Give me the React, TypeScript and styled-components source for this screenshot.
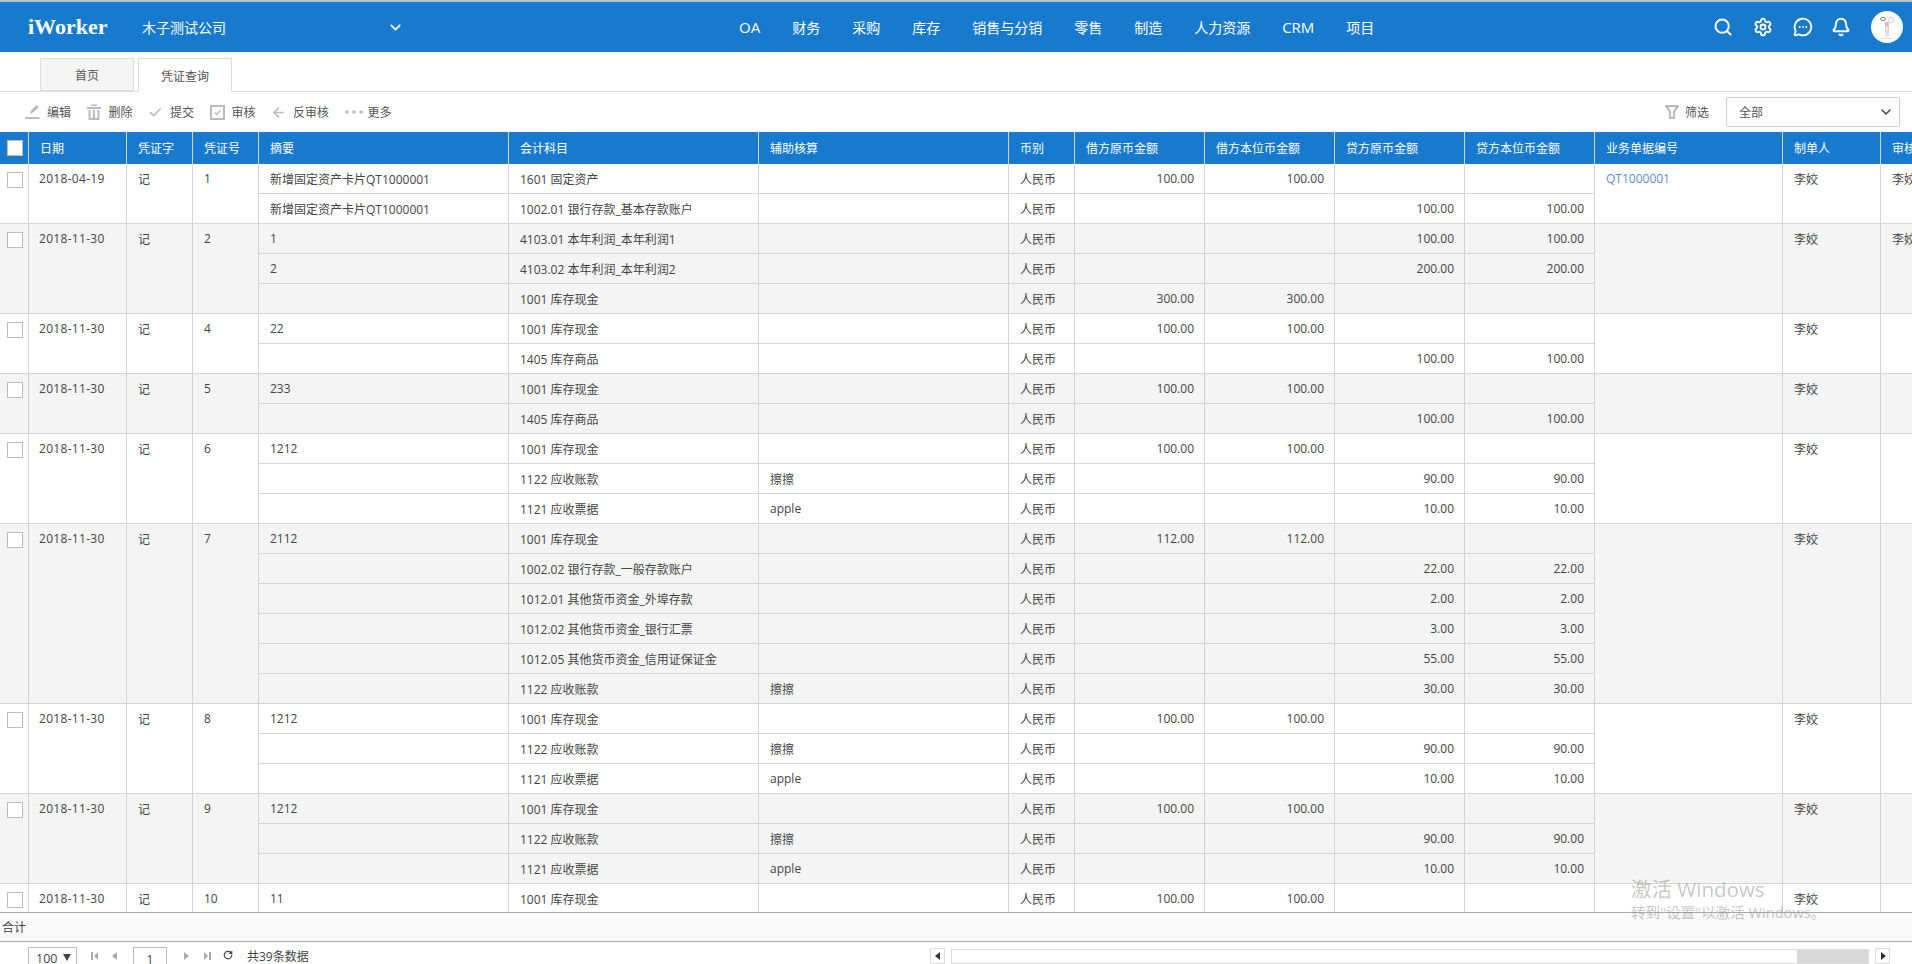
import { Fragment } from "react";
import styled, { createGlobalStyle } from "styled-components";
import { ArrowLeft, Bell, Check, ChevronDown, MessageCircleMore, RotateCw, Search, Settings } from "lucide-react";

const GlobalStyle = createGlobalStyle`
	html, body {
		margin: 0;
		height: 100%;
		overflow: hidden;
		background: #fff;
	}
	body {
		font-family: "Open Sans", "Noto Sans CJK SC", sans-serif;
		font-size: 12px;
		color: #444;
	}
	#root {
		height: 100%;
	}
`;

const Page = styled.div`
	height: 964px;
	display: flex;
	flex-direction: column;
	overflow: hidden;
	position: relative;
`;

const Header = styled.header`
	flex: 0 0 52px;
	box-sizing: border-box;
	border-top: 2px solid #b9c0c6;
	background: #187acf;
	color: #fff;
	display: flex;
	align-items: center;
	padding-left: 28px;
`;

const Logo = styled.div`
	width: 114px;
	font-family: "Liberation Serif", serif;
	font-weight: 700;
	font-size: 22px;
`;

const Company = styled.div`
	width: 262px;
	display: flex;
	align-items: center;
	justify-content: space-between;
	font-size: 14px;
`;

const Nav = styled.nav`
	display: flex;
	gap: 32px;
	margin-left: 335px;
	font-size: 14px;
`;

const NavItem = styled.span<{ $latin?: boolean }>`
	font-size: ${(p) => (p.$latin ? "15px" : "14px")};
`;

const HeaderIcons = styled.div`
	margin-left: auto;
	display: flex;
	align-items: center;
	gap: 20px;
	padding-right: 9px;
`;

const BellIcon = styled(Bell)`
	margin-left: -2px;
`;

const Avatar = styled.div`
	width: 32px;
	height: 32px;
	border-radius: 50%;
	background: #fff;
	overflow: hidden;
`;

const TabBar = styled.div`
	flex: 0 0 40px;
	box-sizing: border-box;
	border-bottom: 1px solid #ddd;
	display: flex;
	align-items: flex-end;
	gap: 4px;
	padding-left: 40px;
`;

const Tab = styled.div<{ $active?: boolean }>`
	width: 94px;
	height: ${(p) => (p.$active ? "34px" : "33px")};
	box-sizing: border-box;
	border: 1px solid #ddd;
	border-bottom: ${(p) => (p.$active ? "none" : "1px solid #ddd")};
	margin-bottom: ${(p) => (p.$active ? "-1px" : "0")};
	background: ${(p) => (p.$active ? "#fff" : "#f5f5f5")};
	display: flex;
	align-items: center;
	justify-content: center;
	color: #555;
`;

const Toolbar = styled.div`
	flex: 0 0 40px;
	display: flex;
	align-items: center;
	padding: 0 12px 0 25px;
	gap: 15.5px;
`;

const ToolButton = styled.div<{ $gap?: number }>`
	display: flex;
	align-items: center;
	gap: ${(p) => p.$gap ?? 7}px;
	color: #555;
`;

const ToolIcon = styled.span<{ $w?: number }>`
	width: ${(p) => p.$w ?? 15}px;
	height: 16px;
	display: flex;
	align-items: center;
	justify-content: center;
	color: #bbb;
`;

const FilterGroup = styled.div`
	margin-left: auto;
	display: flex;
	align-items: center;
`;

const FilterLabel = styled(ToolButton)`
	margin-right: 17px;
`;

const FilterSelect = styled.div`
	width: 174px;
	height: 30px;
	box-sizing: border-box;
	border: 1px solid #ccc;
	border-radius: 2px;
	display: flex;
	align-items: center;
	justify-content: space-between;
	padding: 0 5px 0 12px;
	color: #555;
`;

const TableArea = styled.div`
	flex: 1;
	min-height: 0;
	overflow: hidden;
`;

const Grid = styled.table<{ $w: number }>`
	table-layout: fixed;
	border-collapse: separate;
	border-spacing: 0;
	width: ${(p) => p.$w}px;
`;

const HeadCell = styled.th<{ $w: number }>`
	width: ${(p) => p.$w}px;
	height: 32px;
	box-sizing: border-box;
	padding: 0 0 0 11px;
	background: #187acf;
	border-right: 1px solid #d4d4d4;
	color: #fff;
	font-weight: 400;
	text-align: left;
	white-space: nowrap;
	overflow: hidden;
`;

const Row = styled.tr<{ $alt: boolean }>`
	background: ${(p) => (p.$alt ? "#f4f4f4" : "#fff")};
`;

const Cell = styled.td<{ $right?: boolean }>`
	height: 30px;
	box-sizing: border-box;
	padding: 0 ${(p) => (p.$right ? "10px" : "0")} 0 ${(p) => (p.$right ? "0" : "11px")};
	border-right: 1px solid #d4d4d4;
	border-bottom: 1px solid #d4d4d4;
	text-align: ${(p) => (p.$right ? "right" : "left")};
	vertical-align: middle;
	white-space: nowrap;
	overflow: hidden;
`;

const TopCell = styled(Cell)`
	vertical-align: top;
	padding-top: 6px;
`;

const DateCell = styled(TopCell)`
	padding-left: 10px;
	letter-spacing: 0.3px;
`;

const CheckCell = styled(Cell)`
	vertical-align: top;
	padding: 8px 0 0 7px;
`;

const CheckHead = styled(HeadCell)`
	padding: 0 0 0 7px;
`;

const CheckBox = styled.span`
	display: block;
	width: 16px;
	height: 16px;
	box-sizing: border-box;
	border: 1px solid #bbb;
	background: #fff;
`;

const DocLink = styled.span`
	color: #5b8bd8;
`;

const SummaryBar = styled.div`
	flex: 0 0 30px;
	box-sizing: border-box;
	border-top: 1px solid #aaa;
	border-bottom: 1px solid #aaa;
	background: #f9f9f9;
	display: flex;
	align-items: center;
	padding-left: 2px;
	color: #444;
`;

const Pager = styled.div`
	flex: 0 0 22px;
	box-sizing: border-box;
	overflow: hidden;
	display: flex;
	align-items: flex-start;
	padding: 5px 22px 0 28px;
`;

const PageSize = styled.div`
	width: 49px;
	height: 24px;
	box-sizing: border-box;
	border: 1px solid #bbb;
	display: flex;
	justify-content: space-between;
	align-items: flex-start;
	padding: 2px 5px 0 7px;
	font-size: 12.5px;
	flex: none;
`;

const PageSizeArrow = styled.svg`
	margin-top: 3px;
	color: #444;
`;

const PageInput = styled.div`
	width: 34px;
	height: 24px;
	box-sizing: border-box;
	border: 1px solid #bbb;
	text-align: center;
	padding-top: 3px;
	flex: none;
	margin-left: 16px;
`;

const PagerGlyph = styled.svg<{ $ml: number }>`
	flex: none;
	margin: 4px 0 0 ${(p) => p.$ml}px;
	color: #aaa;
`;

const RefreshGlyph = styled.span`
	flex: none;
	display: flex;
	margin: 3px 0 0 12px;
	color: #444;
`;

const Total = styled.span`
	flex: none;
	margin: 0 0 0 14px;
`;

const ScrollArrow = styled.div<{ $push?: boolean }>`
	width: 15px;
	height: 16px;
	box-sizing: border-box;
	border: 1px solid #ddd;
	display: flex;
	align-items: center;
	justify-content: center;
	flex: none;
	margin-top: 1px;
	margin-left: ${(p) => (p.$push ? "auto" : "0")};
`;

const ScrollTrack = styled.div`
	width: 918px;
	height: 15px;
	box-sizing: border-box;
	border: 1px solid #ddd;
	background: #fff;
	margin: 2px 6px 0 6px;
	display: flex;
	justify-content: flex-end;
	flex: none;
`;

const ScrollThumb = styled.div`
	width: 71px;
	background: #d8d8d8;
`;

const Watermark = styled.div`
	position: absolute;
	left: 1631px;
	top: 876px;
	color: rgba(120, 120, 120, 0.42);
	pointer-events: none;
	font-size: 14.6px;
	line-height: 21px;
`;

const WatermarkTitle = styled.div`
	font-size: 20.5px;
	line-height: 26px;
`;

const navItems = ["OA", "财务", "采购", "库存", "销售与分销", "零售", "制造", "人力资源", "CRM", "项目"];

const columns = [
	{ title: "日期", w: 98 },
	{ title: "凭证字", w: 66 },
	{ title: "凭证号", w: 66 },
	{ title: "摘要", w: 250 },
	{ title: "会计科目", w: 250 },
	{ title: "辅助核算", w: 250 },
	{ title: "币别", w: 66 },
	{ title: "借方原币金额", w: 130 },
	{ title: "借方本位币金额", w: 130 },
	{ title: "贷方原币金额", w: 130 },
	{ title: "贷方本位币金额", w: 130 },
	{ title: "业务单据编号", w: 188 },
	{ title: "制单人", w: 98 },
	{ title: "审核人", w: 98 },
];

const checkWidth = 29;
const gridWidth = columns.reduce((sum, c) => sum + c.w, checkWidth);

type Line = { memo?: string; account: string; aux?: string; debit?: string; credit?: string };
type Voucher = { date: string; no: string; doc?: string; auditor?: string; lines: Line[] };

const settle = (memo: string): Line[] => [
	{ memo, account: "1001 库存现金", debit: "100.00" },
	{ account: "1122 应收账款", aux: "擦擦", credit: "90.00" },
	{ account: "1121 应收票据", aux: "apple", credit: "10.00" },
];

const vouchers: Voucher[] = [
	{
		date: "2018-04-19",
		no: "1",
		doc: "QT1000001",
		auditor: "李姣",
		lines: [
			{ memo: "新增固定资产卡片QT1000001", account: "1601 固定资产", debit: "100.00" },
			{ memo: "新增固定资产卡片QT1000001", account: "1002.01 银行存款_基本存款账户", credit: "100.00" },
		],
	},
	{
		date: "2018-11-30",
		no: "2",
		auditor: "李姣",
		lines: [
			{ memo: "1", account: "4103.01 本年利润_本年利润1", credit: "100.00" },
			{ memo: "2", account: "4103.02 本年利润_本年利润2", credit: "200.00" },
			{ account: "1001 库存现金", debit: "300.00" },
		],
	},
	{
		date: "2018-11-30",
		no: "4",
		lines: [
			{ memo: "22", account: "1001 库存现金", debit: "100.00" },
			{ account: "1405 库存商品", credit: "100.00" },
		],
	},
	{
		date: "2018-11-30",
		no: "5",
		lines: [
			{ memo: "233", account: "1001 库存现金", debit: "100.00" },
			{ account: "1405 库存商品", credit: "100.00" },
		],
	},
	{ date: "2018-11-30", no: "6", lines: settle("1212") },
	{
		date: "2018-11-30",
		no: "7",
		lines: [
			{ memo: "2112", account: "1001 库存现金", debit: "112.00" },
			{ account: "1002.02 银行存款_一般存款账户", credit: "22.00" },
			{ account: "1012.01 其他货币资金_外埠存款", credit: "2.00" },
			{ account: "1012.02 其他货币资金_银行汇票", credit: "3.00" },
			{ account: "1012.05 其他货币资金_信用证保证金", credit: "55.00" },
			{ account: "1122 应收账款", aux: "擦擦", credit: "30.00" },
		],
	},
	{ date: "2018-11-30", no: "8", lines: settle("1212") },
	{ date: "2018-11-30", no: "9", lines: settle("1212") },
	{ date: "2018-11-30", no: "10", lines: [{ memo: "11", account: "1001 库存现金", debit: "100.00" }] },
];

const AvatarArt = () => (
	<svg width="32" height="32" viewBox="0 0 32 32" fill="none">
		<ellipse cx="12" cy="8" rx="2.6" ry="1.6" stroke="#666" strokeWidth="0.8" />
		<ellipse cx="20" cy="9" rx="2.4" ry="2.8" stroke="#bbb" strokeWidth="0.7" />
		<circle cx="16" cy="13" r="2.2" fill="#d9b9a8" />
		<path d="M14.5 15h3v6h-3z" fill="#eee6de" stroke="#bbb" strokeWidth="0.5" />
		<path d="M15 21v5M17 21v5" stroke="#bbb" strokeWidth="0.8" />
		<path d="M10 27.5h12" stroke="#ccc" strokeWidth="0.7" />
	</svg>
);

const EditIcon = () => (
	<svg width="15" height="16" viewBox="0 0 15 16" fill="currentColor">
		<path d="M11.5 1 14 3 8 8.5l-3.5 1.5L6 6.5z" />
		<rect x="0" y="13" width="14.5" height="2" />
	</svg>
);

const TrashIcon = () => (
	<svg width="14" height="16" viewBox="0 0 14 16" fill="currentColor">
		<rect x="4" y="0.5" width="6" height="1.5" />
		<rect x="0" y="3" width="14" height="2" />
		<path d="M1.5 6h2v8h2.5V6h2v8h2.5V6h2v10h-11z" />
	</svg>
);

const ReviewIcon = () => (
	<svg width="15" height="15" viewBox="0 0 15 15" fill="none" stroke="currentColor">
		<rect x="1" y="1" width="13" height="13" strokeWidth="2" />
		<path d="m4.5 7.5 2 2 4-4" strokeWidth="1.5" />
	</svg>
);

const DotsIcon = () => (
	<svg width="18" height="4" viewBox="0 0 18 4" fill="currentColor">
		<circle cx="2" cy="2" r="1.8" />
		<circle cx="9" cy="2" r="1.8" />
		<circle cx="16" cy="2" r="1.8" />
	</svg>
);

const FunnelIcon = () => (
	<svg width="14" height="14" viewBox="0 0 14 14" fill="none" stroke="currentColor" strokeWidth="2.2">
		<path d="M1 1.2h12L9 6.5V13H5V6.5z" />
	</svg>
);

const PagerArrow = ({ dir, bar, ml }: { dir: "left" | "right"; bar?: boolean; ml: number }) => (
	<PagerGlyph $ml={ml} width={bar ? 7 : 6} height="10" viewBox={bar ? "0 0 7 10" : "0 0 6 10"} fill="currentColor">
		{dir === "left" ? (
			<path d={bar ? "M7 1v8L3 5z" : "M6 1v8L1 5z"} />
		) : (
			<path d={bar ? "M0 1v8l4-4z" : "M0 1v8l5-4z"} />
		)}
		{bar && <rect x={dir === "left" ? 0 : 5} y="1" width="2" height="8" />}
	</PagerGlyph>
);

const ScrollGlyph = ({ dir }: { dir: "left" | "right" }) => (
	<svg width="6" height="8" viewBox="0 0 6 8" fill="#333">
		{dir === "left" ? <path d="M5 0v8L0 4z" /> : <path d="M1 0v8l5-4z" />}
	</svg>
);

export default function App() {
	return (
		<Page>
			<GlobalStyle />
			<Header>
				<Logo>iWorker</Logo>
				<Company>
					木子测试公司
					<ChevronDown size={17} strokeWidth={2.4} />
				</Company>
				<Nav>
					{navItems.map((n) => (
						<NavItem key={n} $latin={/^[A-Z]+$/.test(n)}>
							{n}
						</NavItem>
					))}
				</Nav>
				<HeaderIcons>
					<Search size={20} strokeWidth={2.4} />
					<Settings size={20} strokeWidth={2.2} />
					<MessageCircleMore size={20} strokeWidth={2.2} />
					<BellIcon size={20} strokeWidth={2.4} />
					<Avatar>
						<AvatarArt />
					</Avatar>
				</HeaderIcons>
			</Header>
			<TabBar>
				<Tab>首页</Tab>
				<Tab $active>凭证查询</Tab>
			</TabBar>
			<Toolbar>
				<ToolButton>
					<ToolIcon>
						<EditIcon />
					</ToolIcon>
					编辑
				</ToolButton>
				<ToolButton>
					<ToolIcon>
						<TrashIcon />
					</ToolIcon>
					删除
				</ToolButton>
				<ToolButton>
					<ToolIcon>
						<Check size={19} strokeWidth={2.4} />
					</ToolIcon>
					提交
				</ToolButton>
				<ToolButton>
					<ToolIcon>
						<ReviewIcon />
					</ToolIcon>
					审核
				</ToolButton>
				<ToolButton>
					<ToolIcon>
						<ArrowLeft size={19} strokeWidth={2.6} />
					</ToolIcon>
					反审核
				</ToolButton>
				<ToolButton $gap={5}>
					<ToolIcon $w={18}>
						<DotsIcon />
					</ToolIcon>
					更多
				</ToolButton>
				<FilterGroup>
					<FilterLabel $gap={5}>
						<ToolIcon>
							<FunnelIcon />
						</ToolIcon>
						筛选
					</FilterLabel>
					<FilterSelect>
						全部
						<ChevronDown size={16} color="#444" strokeWidth={2.2} />
					</FilterSelect>
				</FilterGroup>
			</Toolbar>
			<TableArea>
				<Grid $w={gridWidth}>
					<thead>
						<tr>
							<CheckHead $w={checkWidth}>
								<CheckBox />
							</CheckHead>
							{columns.map((c) => (
								<HeadCell key={c.title} $w={c.w}>
									{c.title}
								</HeadCell>
							))}
						</tr>
					</thead>
					<tbody>
						{vouchers.map((v, vi) => (
							<Fragment key={v.no}>
								{v.lines.map((l, li) => (
									<Row key={li} $alt={vi % 2 === 1}>
										{li === 0 && (
											<>
												<CheckCell rowSpan={v.lines.length}>
													<CheckBox />
												</CheckCell>
												<DateCell rowSpan={v.lines.length}>{v.date}</DateCell>
												<TopCell rowSpan={v.lines.length}>记</TopCell>
												<TopCell rowSpan={v.lines.length}>{v.no}</TopCell>
											</>
										)}
										<Cell>{l.memo}</Cell>
										<Cell>{l.account}</Cell>
										<Cell>{l.aux}</Cell>
										<Cell>人民币</Cell>
										<Cell $right>{l.debit}</Cell>
										<Cell $right>{l.debit}</Cell>
										<Cell $right>{l.credit}</Cell>
										<Cell $right>{l.credit}</Cell>
										{li === 0 && (
											<>
												<TopCell rowSpan={v.lines.length}>
													{v.doc && <DocLink>{v.doc}</DocLink>}
												</TopCell>
												<TopCell rowSpan={v.lines.length}>李姣</TopCell>
												<TopCell rowSpan={v.lines.length}>{v.auditor}</TopCell>
											</>
										)}
									</Row>
								))}
							</Fragment>
						))}
					</tbody>
				</Grid>
			</TableArea>
			<SummaryBar>合计</SummaryBar>
			<Pager>
				<PageSize>
					100
					<PageSizeArrow width="8" height="8" viewBox="0 0 8 8" fill="currentColor">
						<path d="M0 1h8L4 8z" />
					</PageSizeArrow>
				</PageSize>
				<PagerArrow dir="left" bar ml={14} />
				<PagerArrow dir="left" ml={13} />
				<PageInput>1</PageInput>
				<PagerArrow dir="right" ml={17} />
				<PagerArrow dir="right" bar ml={14} />
				<RefreshGlyph>
					<RotateCw size={10} strokeWidth={3} />
				</RefreshGlyph>
				<Total>共39条数据</Total>
				<ScrollArrow $push>
					<ScrollGlyph dir="left" />
				</ScrollArrow>
				<ScrollTrack>
					<ScrollThumb />
				</ScrollTrack>
				<ScrollArrow>
					<ScrollGlyph dir="right" />
				</ScrollArrow>
			</Pager>
			<Watermark>
				<WatermarkTitle>激活 Windows</WatermarkTitle>
				转到"设置"以激活 Windows。
			</Watermark>
		</Page>
	);
}
